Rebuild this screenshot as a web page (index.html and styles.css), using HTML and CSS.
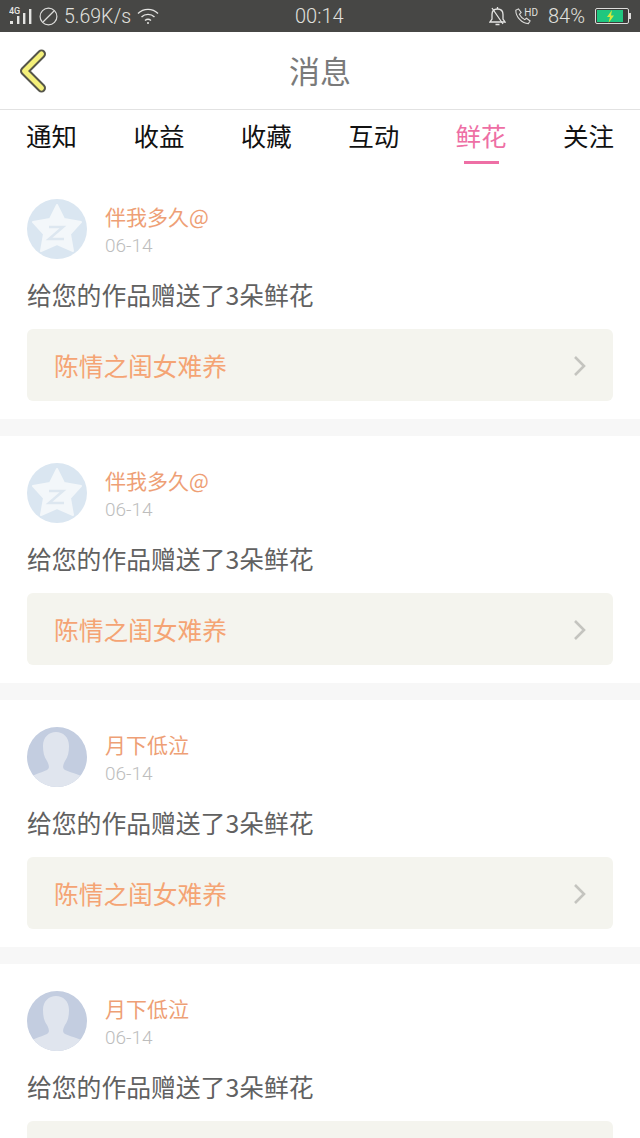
FILE: index.html
```html
<!DOCTYPE html>
<html lang="zh-CN">
<head>
	<meta charset="UTF-8">
	<meta name="viewport" content="width=device-width, initial-scale=1.0">
	<title>消息</title>
	<link rel="stylesheet" href="styles.css">
</head>
<body>
	<div class="statusbar">
		<div class="status-left">
			<svg class="icon-signal" width="24" height="20" viewBox="0 0 24 20">
				<text x="0" y="8" class="tiny">4G</text>
				<rect x="1" y="15" width="3" height="3" fill="#e4e4e2"/>
				<rect x="8" y="10" width="2.4" height="8" fill="#e4e4e2"/>
				<rect x="14" y="7" width="2.4" height="11" fill="#e4e4e2"/>
				<rect x="20" y="3" width="2.4" height="15" fill="#e4e4e2"/>
			</svg>
			<svg width="19" height="19" viewBox="0 0 19 19" fill="none" stroke="#dcdcda" stroke-width="1.2">
				<circle cx="9.5" cy="9.5" r="8.4"/>
				<path d="M4 15 15 4"/>
			</svg>
			<span class="speed">5.69K/s</span>
			<svg width="22" height="18" viewBox="0 0 22 18" fill="none" stroke="#e4e4e2" stroke-width="1.4">
				<path d="M1 6.5C6.5 1 15.5 1 21 6.5"/>
				<path d="M4.5 10C8 6.5 14 6.5 17.5 10"/>
				<path d="M8 13.5C9.8 12 12.2 12 14 13.5"/>
				<circle cx="11" cy="16" r="1" fill="#e4e4e2" stroke="none"/>
			</svg>
		</div>
		<span class="clock">00:14</span>
		<div class="status-right">
			<svg class="bell" width="17" height="20" viewBox="0 0 17 20" fill="none" stroke="#e4e4e2" stroke-width="1.3">
				<path d="M1 16h15l-2-3V8.500C14 5 12 3 8.500 3S3 5 3 8.500V13z"/>
				<path d="M6.500 18.500h4M8.500 1v2M3 2l11 16"/>
			</svg>
			<div class="call">
				<svg width="17" height="19" viewBox="0 0 19 19" fill="none" stroke="#dcdcda" stroke-width="1.2">
					<path d="M2 2.500 5 1l3 4-2 2c1 2 3 4.500 6 6l2-1.500 4 3-2 3C9 17.500 2 10 2 2.500z"/>
				</svg>
				<span class="hd">HD</span>
			</div>
			<span class="percent">84%</span>
			<div class="battery">
				<div class="battery-body">
					<div class="battery-fill">
						<svg width="9" height="13" viewBox="0 0 9 13"><path d="M6 0 1 7h3l-1.500 6L8 5.500H5z" fill="#d8e83a"/></svg>
					</div>
				</div>
				<div class="battery-tip"></div>
			</div>
		</div>
	</div>

	<header class="topbar">
		<svg class="back" width="36" height="48" viewBox="0 0 36 48">
			<path d="M25.5 6 8.500 23l17 17" fill="none" stroke="#55554a" stroke-width="9" stroke-linecap="round" stroke-linejoin="round"/>
			<path d="M25.5 6 8.500 23l17 17" fill="none" stroke="#f4f07a" stroke-width="5" stroke-linecap="round" stroke-linejoin="round"/>
		</svg>
		<h1 class="title">消息</h1>
	</header>

	<nav class="tabs">
		<span class="tab">通知</span>
		<span class="tab">收益</span>
		<span class="tab">收藏</span>
		<span class="tab">互动</span>
		<span class="tab active">鲜花</span>
		<span class="tab">关注</span>
	</nav>

	<main class="list">
		<section class="card">
			<div class="user">
				<svg class="avatar" viewBox="0 0 60 60">
					<circle cx="30" cy="30" r="30" fill="#dae6f1"/>
					<path d="M30 6 37 20 54 23 43 35 46 52 30 45 14 52 17 35 6 23 23 20z" fill="#f3f7fa" stroke="#f3f7fa" stroke-width="2" stroke-linejoin="round"/>
					<path d="M22 28h14L22 40h15" fill="none" stroke="#dde7f0" stroke-width="2.5"/>
				</svg>
				<div class="meta">
					<span class="name">伴我多久@</span>
					<span class="date">06-14</span>
				</div>
			</div>
			<p class="text">给您的作品赠送了3朵鲜花</p>
			<div class="work">
				<span class="work-title">陈情之闺女难养</span>
				<svg class="chevron" width="14" height="22" viewBox="0 0 14 22" fill="none" stroke="#c4c4bf" stroke-width="2.6"><path d="M2 2l9 9-9 9"/></svg>
			</div>
		</section>

		<section class="card">
			<div class="user">
				<svg class="avatar" viewBox="0 0 60 60">
					<circle cx="30" cy="30" r="30" fill="#dae6f1"/>
					<path d="M30 6 37 20 54 23 43 35 46 52 30 45 14 52 17 35 6 23 23 20z" fill="#f3f7fa" stroke="#f3f7fa" stroke-width="2" stroke-linejoin="round"/>
					<path d="M22 28h14L22 40h15" fill="none" stroke="#dde7f0" stroke-width="2.5"/>
				</svg>
				<div class="meta">
					<span class="name">伴我多久@</span>
					<span class="date">06-14</span>
				</div>
			</div>
			<p class="text">给您的作品赠送了3朵鲜花</p>
			<div class="work">
				<span class="work-title">陈情之闺女难养</span>
				<svg class="chevron" width="14" height="22" viewBox="0 0 14 22" fill="none" stroke="#c4c4bf" stroke-width="2.6"><path d="M2 2l9 9-9 9"/></svg>
			</div>
		</section>

		<section class="card">
			<div class="user">
				<svg class="avatar" viewBox="0 0 60 60">
					<clipPath id="round1"><circle cx="30" cy="30" r="30"/></clipPath>
					<g clip-path="url(#round1)">
						<rect width="60" height="60" fill="#c3cde0"/>
						<path d="M0 60V54c2-6 14-8 20-11 3-2 2-5 0-9-3-4-4-9-4-15C16 10 22 5 29 5s13 5 13 14c0 6-1 11-4 15-2 4-3 7 0 9 6 3 20 5 22 11v6z" fill="#e0e5ee"/>
					</g>
				</svg>
				<div class="meta">
					<span class="name">月下低泣</span>
					<span class="date">06-14</span>
				</div>
			</div>
			<p class="text">给您的作品赠送了3朵鲜花</p>
			<div class="work">
				<span class="work-title">陈情之闺女难养</span>
				<svg class="chevron" width="14" height="22" viewBox="0 0 14 22" fill="none" stroke="#c4c4bf" stroke-width="2.6"><path d="M2 2l9 9-9 9"/></svg>
			</div>
		</section>

		<section class="card last">
			<div class="user">
				<svg class="avatar" viewBox="0 0 60 60">
					<clipPath id="round2"><circle cx="30" cy="30" r="30"/></clipPath>
					<g clip-path="url(#round2)">
						<rect width="60" height="60" fill="#c3cde0"/>
						<path d="M0 60V54c2-6 14-8 20-11 3-2 2-5 0-9-3-4-4-9-4-15C16 10 22 5 29 5s13 5 13 14c0 6-1 11-4 15-2 4-3 7 0 9 6 3 20 5 22 11v6z" fill="#e0e5ee"/>
					</g>
				</svg>
				<div class="meta">
					<span class="name">月下低泣</span>
					<span class="date">06-14</span>
				</div>
			</div>
			<p class="text">给您的作品赠送了3朵鲜花</p>
			<div class="work"></div>
		</section>
	</main>
</body>
</html>
```

FILE: styles.css
```css
* {
	margin: 0;
	padding: 0;
	box-sizing: border-box;
}

html, body {
	height: 100%;
	overflow: hidden;
}

body {
	background-color: #fff;
	font-family: "Noto Sans CJK SC", "Noto Sans", sans-serif;
}

.statusbar {
	height: 32px;
	padding: 0 9px;
	background-color: #474745;
	color: #e0e0de;
	display: flex;
	align-items: center;
	justify-content: space-between;
	position: relative;
	font-family: "Roboto", "Liberation Sans", sans-serif;
	font-size: 20px;
	font-weight: 300;
}

.status-left, .status-right {
	display: flex;
	align-items: center;
}

.status-left {
	gap: 6px;
}

.status-right {
	gap: 10px;
}

.speed {
	font-size: 19.5px;
}

.bell {
	margin-right: -2px;
}

.tiny {
	font-size: 9px;
	font-weight: 500;
	fill: #e4e4e2;
}

.clock {
	position: absolute;
	left: 295px;
	top: 4px;
}

.call {
	display: flex;
	align-items: flex-start;
}

.hd {
	margin-left: -7px;
	font-size: 10px;
	font-weight: 400;
	line-height: 12px;
}

.battery {
	display: flex;
	align-items: center;
}

.battery-body {
	width: 34px;
	height: 16px;
	padding: 1px;
	border: 1px solid #dcdcda;
	border-radius: 2px;
	background-color: #3c3c3a;
}

.battery-fill {
	width: 26px;
	height: 100%;
	background-color: #1fc77f;
	display: flex;
	align-items: center;
	justify-content: center;
}

.battery-tip {
	width: 2px;
	height: 6px;
	background-color: #dcdcda;
}

.topbar {
	height: 78px;
	padding-bottom: 2px;
	border-bottom: 1px solid #e2e2e2;
	display: flex;
	align-items: center;
	justify-content: center;
	position: relative;
}

.back {
	position: absolute;
	left: 16px;
	top: 16px;
}

.title {
	font-size: 31px;
	font-weight: 400;
	color: #7a7a7a;
}

.tabs {
	height: 62px;
	padding: 0 26px 12px;
	display: flex;
	align-items: center;
	justify-content: space-between;
}

.tab {
	font-size: 25.5px;
	line-height: 44px;
	color: #111;
	position: relative;
}

.tab.active {
	color: #ee6fa5;
}

.tab.active::after {
	content: "";
	position: absolute;
	left: 8px;
	right: 8px;
	bottom: -7px;
	height: 3px;
	background-color: #ee6fa5;
}

.card {
	height: 264px;
	padding: 27px 27px 0;
	border-bottom: 17px solid #f7f7f7;
}

.card.last {
	height: auto;
	border-bottom: 0;
}

.user {
	display: flex;
	align-items: center;
	gap: 18px;
}

.avatar {
	width: 60px;
	height: 60px;
	flex: none;
}

.meta {
	padding-top: 2px;
	display: flex;
	flex-direction: column;
}

.name {
	font-size: 21px;
	line-height: 30px;
	color: #ee9f76;
}

.date {
	margin-top: 2px;
	font-family: "Roboto", "Liberation Sans", sans-serif;
	font-size: 19px;
	font-weight: 300;
	line-height: 26px;
	color: #bdbdbd;
}

.text {
	margin-top: 13px;
	font-size: 24.8px;
	line-height: 44px;
	color: #616161;
}

.work {
	height: 72px;
	margin-top: 13px;
	padding: 0 26px 1px 27px;
	border-radius: 6px;
	background-color: #f4f4ee;
	display: flex;
	align-items: center;
	justify-content: space-between;
}

.work-title {
	font-size: 24.7px;
	color: #f4a474;
}

.chevron {
	margin-top: 2px;
}
```
